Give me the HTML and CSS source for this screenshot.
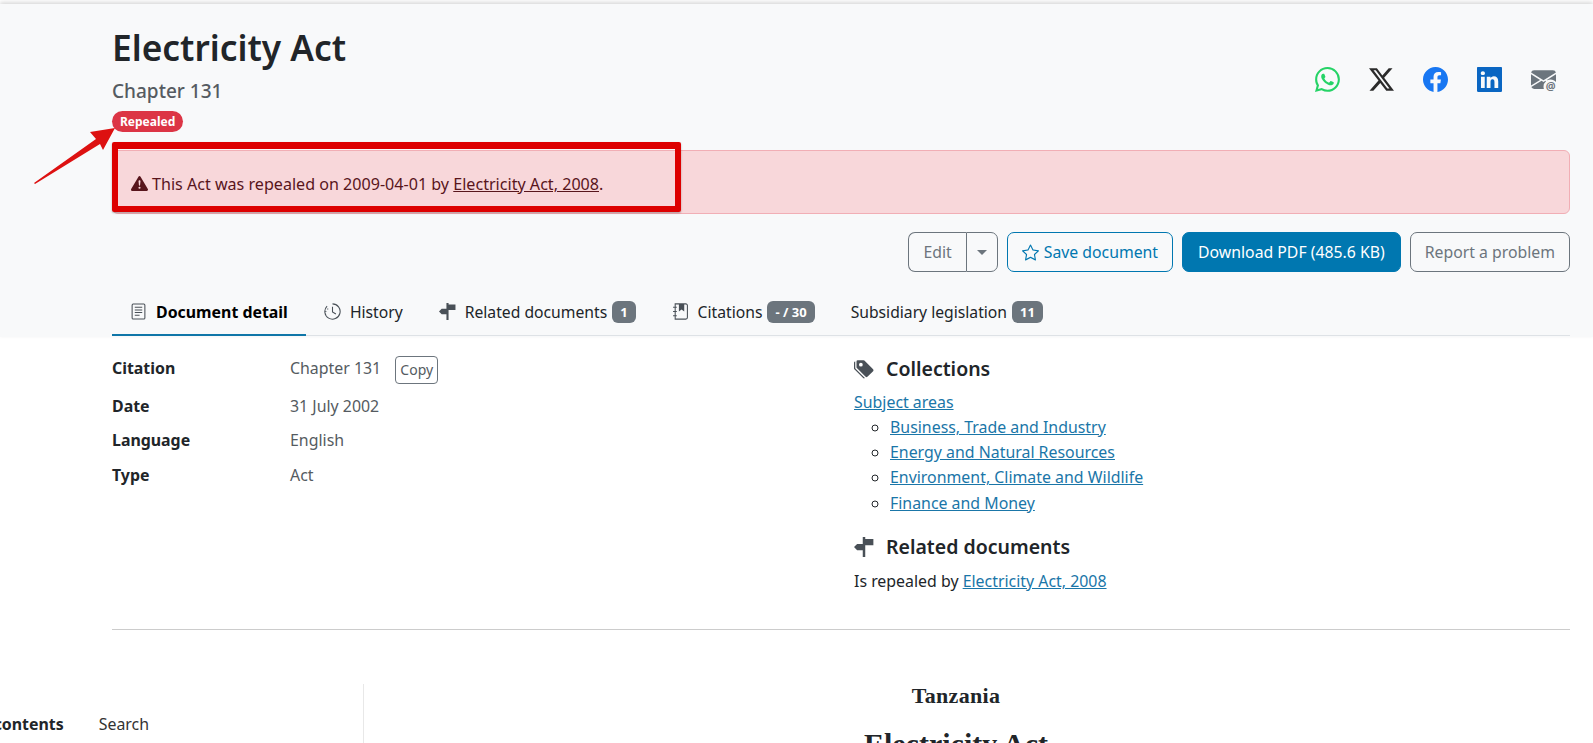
FILE: index.html
```html
<!DOCTYPE html>
<html>
<head>
    <meta charset="UTF-8">
    <title>Electricity Act</title>
    <link rel="stylesheet" href="styles.css">
</head>
<body>
    <div class="page-head">
        <div class="title-row">
            <div>
                <h1>Electricity Act</h1>
                <div class="subtitle">Chapter 131</div>
                <span class="pill">Repealed</span>
            </div>
            <div class="share">
                <svg class="share-icon whatsapp" viewBox="0 0 16 16"><path d="M13.601 2.326A7.85 7.85 0 0 0 7.994 0C3.627 0 .068 3.558.064 7.926c0 1.399.366 2.76 1.057 3.965L0 16l4.204-1.102a7.9 7.9 0 0 0 3.79.965h.004c4.368 0 7.926-3.558 7.93-7.93A7.9 7.9 0 0 0 13.6 2.326zM7.994 14.521a6.6 6.6 0 0 1-3.356-.92l-.24-.144-2.494.654.666-2.433-.156-.251a6.56 6.56 0 0 1-1.007-3.505c0-3.626 2.957-6.584 6.591-6.584a6.56 6.56 0 0 1 4.66 1.931 6.56 6.56 0 0 1 1.928 4.66c-.004 3.639-2.961 6.592-6.592 6.592m3.615-4.934c-.197-.099-1.17-.578-1.353-.646-.182-.065-.315-.099-.445.099-.133.197-.513.646-.627.775-.114.133-.232.148-.43.05-.197-.1-.836-.308-1.592-.985-.59-.525-.985-1.175-1.103-1.372-.114-.198-.011-.304.088-.403.087-.088.197-.232.296-.346.1-.114.133-.198.198-.33.065-.134.034-.248-.015-.347-.05-.099-.445-1.076-.612-1.47-.16-.389-.323-.335-.445-.34-.114-.007-.247-.007-.38-.007a.73.73 0 0 0-.529.247c-.182.198-.691.677-.691 1.654s.71 1.916.81 2.049c.098.133 1.394 2.132 3.383 2.992.47.205.84.326 1.129.418.475.152.904.129 1.246.08.38-.058 1.171-.48 1.338-.943.164-.464.164-.86.114-.943-.049-.084-.182-.133-.38-.232"/></svg>
                <svg class="share-icon xlogo" viewBox="0 0 16 16"><path d="M12.6.75h2.454l-5.36 6.142L16 15.25h-4.937l-3.867-5.07-4.425 5.07H.316l5.733-6.57L0 .75h5.063l3.495 4.633L12.601.75Zm-.86 13.028h1.36L4.323 2.145H2.865z"/></svg>
                <svg class="share-icon facebook" viewBox="0 0 16 16"><path d="M16 8.049c0-4.446-3.582-8.05-8-8.05C3.58 0-.002 3.603-.002 8.05c0 4.017 2.926 7.347 6.75 7.951v-5.625h-2.03V8.05H6.75V6.275c0-2.017 1.195-3.131 3.022-3.131.876 0 1.791.157 1.791.157v1.98h-1.009c-.993 0-1.303.621-1.303 1.258v1.51h2.218l-.354 2.326H9.25V16c3.824-.604 6.75-3.934 6.75-7.951"/></svg>
                <svg class="share-icon linkedin" viewBox="0 0 16 16"><path d="M0 .6C0 .3.3 0 .6 0h14.8c.3 0 .6.3.6.6v14.8c0 .3-.3.6-.6.6H.6c-.3 0-.6-.3-.6-.6zm4.943 12.794V6.169H2.542v7.225zm-1.2-8.212c.837 0 1.358-.554 1.358-1.248-.015-.709-.52-1.248-1.342-1.248S2.4 3.226 2.4 3.934c0 .694.521 1.248 1.327 1.248zm4.908 8.212V9.359c0-.216.016-.432.08-.586.173-.431.568-.878 1.232-.878.869 0 1.216.662 1.216 1.634v3.865h2.401V9.25c0-2.22-1.184-3.252-2.764-3.252-1.274 0-1.845.7-2.165 1.193v.025h-.016l.016-.025V6.169h-2.4c.03.678 0 7.225 0 7.225z"/></svg>
                <svg class="share-icon mail" viewBox="0 0 16 16"><path d="M2 2A2 2 0 0 0 .05 3.555L8 8.414l7.95-4.859A2 2 0 0 0 14 2zm-2 9.8V4.698l5.803 3.546zm6.761-2.97-6.57 4.026A2 2 0 0 0 2 14h6.256A4.5 4.5 0 0 1 8 12.5a4.5 4.5 0 0 1 1.606-3.446l-.367-.225L8 9.586zM16 9.671V4.697l-5.803 3.546.338.208A4.5 4.5 0 0 1 12.5 8c1.414 0 2.675.652 3.5 1.671"/><text class="mail-at" x="12.500" y="15" text-anchor="middle">@</text></svg>
            </div>
        </div>

        <div class="alert">
            <svg class="alert-icon" viewBox="0 0 16 16"><path d="M8.982 1.566a1.13 1.13 0 0 0-1.96 0L.165 13.233c-.457.778.091 1.767.98 1.767h13.713c.889 0 1.438-.99.98-1.767zM8 5c.535 0 .954.462.9.995l-.35 3.507a.552.552 0 0 1-1.1 0L7.1 5.995A.905.905 0 0 1 8 5m.002 6a1 1 0 1 1 0 2 1 1 0 0 1 0-2"/></svg>
            <span>This Act was repealed on 2009-04-01 by <a href="#">Electricity Act, 2008</a>.</span>
        </div>

        <div class="actions">
            <div class="btn-group">
                <span class="btn btn-grey btn-join-left">Edit</span>
                <span class="btn btn-grey btn-join-right"><i class="caret"></i></span>
            </div>
            <span class="btn btn-outline">
                <svg class="star" viewBox="0 0 16 16"><path d="M2.866 14.85c-.078.444.36.791.746.593l4.39-2.256 4.389 2.256c.386.198.824-.149.746-.592l-.83-4.73 3.522-3.356c.33-.314.16-.888-.282-.95l-4.898-.696L8.465.792a.513.513 0 0 0-.927 0L5.354 5.12l-4.898.696c-.441.062-.612.636-.283.95l3.523 3.356-.83 4.73zm4.905-2.767-3.686 1.894.694-3.957a.56.56 0 0 0-.163-.505L1.71 6.745l4.052-.576a.53.53 0 0 0 .393-.288L8 2.223l1.847 3.658a.53.53 0 0 0 .393.288l4.052.575-2.906 2.77a.56.56 0 0 0-.163.506l.694 3.957-3.686-1.894a.5.5 0 0 0-.461 0z"/></svg>
                Save document
            </span>
            <span class="btn btn-primary">Download PDF (485.6 KB)</span>
            <span class="btn btn-grey">Report a problem</span>
        </div>

        <div class="tabs">
            <div class="tab active">
                <svg class="tab-icon" viewBox="0 0 16 16"><path fill="none" stroke="currentColor" d="M3 1h10a1 1 0 0 1 1 1v12a1 1 0 0 1-1 1H3a1 1 0 0 1-1-1V2a1 1 0 0 1 1-1z"/><path d="M4.500 3.500h7v1h-7zM4.500 6h7v1h-7zM4.500 8.500h7v1h-7zM4.500 11h4.500v1H4.500z"/></svg>
                Document detail
            </div>
            <div class="tab">
                <svg class="tab-icon" viewBox="0 0 16 16"><path fill="none" stroke="currentColor" d="M8 .8a7.200 7.200 0 1 1-5.100 2.100"/><path fill="none" stroke="currentColor" d="M8 3.500V8.500l3.200 1.800"/><path d="M3 5.200h1v1H3zM1.200 7.500h1v1h-1z"/></svg>
                History
            </div>
            <div class="tab">
                <svg class="tab-icon" viewBox="0 0 16 16"><path d="M7 0h2v16H7z"/><path d="M8 1.500h7.500v5H8zM8 5.500H2.500L0 8l2.500 2.500H8z"/></svg>
                Related documents
                <span class="count">1</span>
            </div>
            <div class="tab">
                <svg class="tab-icon" viewBox="0 0 16 16"><path fill="none" stroke="currentColor" d="M3 .8h10a1.500 1.500 0 0 1 1.500 1.500v11.400a1.500 1.500 0 0 1-1.500 1.500H3z"/><path d="M6.500 1h5v7L9 6.200 6.500 8zM1 3.500h3.500v1H1zM1 7.500h3.500v1H1zM1 11.500h3.500v1H1z"/></svg>
                Citations
                <span class="count">- / 30</span>
            </div>
            <div class="tab">
                Subsidiary legislation
                <span class="count">11</span>
            </div>
        </div>
    </div>

    <div class="details">
        <dl class="facts">
            <dt class="first">Citation</dt>
            <dd class="first-value">Chapter 131 <span class="copy">Copy</span></dd>
            <dt>Date</dt>
            <dd>31 July 2002</dd>
            <dt>Language</dt>
            <dd>English</dd>
            <dt>Type</dt>
            <dd>Act</dd>
        </dl>
        <div class="side">
            <h2>
                <svg class="head-icon" viewBox="0 0 16 16"><path d="M2 2a1 1 0 0 1 1-1h4.586a1 1 0 0 1 .707.293l7 7a1 1 0 0 1 0 1.414l-4.586 4.586a1 1 0 0 1-1.414 0l-7-7A1 1 0 0 1 2 6.586zm3.500 4a1.500 1.500 0 1 0 0-3 1.500 1.500 0 0 0 0 3"/><path d="M1.293 7.793A1 1 0 0 1 1 7.086V2a1 1 0 0 0-1 1v4.586a1 1 0 0 0 .293.707l7 7a1 1 0 0 0 1.414 0l.043-.043z"/></svg>
                Collections
            </h2>
            <a href="#">Subject areas</a>
            <ul>
                <li><a href="#">Business, Trade and Industry</a></li>
                <li><a href="#">Energy and Natural Resources</a></li>
                <li><a href="#">Environment, Climate and Wildlife</a></li>
                <li><a href="#">Finance and Money</a></li>
            </ul>
            <h2 class="second">
                <svg class="head-icon" viewBox="0 0 16 16"><path d="M7 0h2v16H7z"/><path d="M8 1.500h7.500v5H8zM8 5.500H2.500L0 8l2.500 2.500H8z"/></svg>
                Related documents
            </h2>
            <div>Is repealed by <a href="#">Electricity Act, 2008</a></div>
        </div>
    </div>

    <hr class="rule">

    <div class="doc">
        <div class="doc-nav">
            <span class="nav-active">Table of contents</span>
            <span class="nav-plain">Search</span>
        </div>
        <div class="doc-body">
            <div class="doc-country">Tanzania</div>
            <div class="doc-title">Electricity Act</div>
        </div>
    </div>

    <!-- annotation drawn over the screenshot -->
    <div class="mark-box"></div>
    <svg class="mark-arrow" viewBox="0 0 90 70"><path d="M4 63 L66 19 L60 12 L85 8 L73 30 L70 24 L5 64 Z"/></svg>
</body>
</html>
```

FILE: styles.css
```css
html, body {
    margin: 0;
    height: 743px;
    overflow: hidden;
}
body {
    position: relative;
    background-color: #fff;
    color: #212529;
    font-family: "Noto Sans", sans-serif;
    font-size: 15.900px;
    line-height: 24px;
}
a {
    color: #1a76a8;
}

.page-head {
    margin-top: 4px;
    padding: 4px 23px 0 112px;
    height: 333px;
    box-sizing: border-box;
    background-color: #f8f9fa;
    box-shadow: 0 -2px 4px rgba(0, 0, 0, 0.15);
}
.title-row {
    display: flex;
    justify-content: space-between;
    height: 142px;
}
h1 {
    margin: 0;
    font-size: 35.300px;
    font-weight: 600;
    line-height: 78px;
    height: 62px;
}
.subtitle {
    color: #555b61;
    font-size: 19px;
    font-weight: 500;
    line-height: 32px;
    margin-top: 5px;
}
.pill {
    display: inline-block;
    background-color: #dc3545;
    color: #fff;
    font-size: 12px;
    font-weight: 700;
    line-height: 21px;
    padding: 0 8px;
    border-radius: 11px;
    vertical-align: top;
    margin-top: 4px;
}
.share {
    display: flex;
    gap: 29px;
    padding: 59px 14px 0 0;
}
.share-icon {
    width: 25px;
    height: 25px;
    fill: currentColor;
}
.whatsapp { color: #25d366; }
.xlogo { color: #2b2b2b; }
.facebook { color: #1877f2; }
.linkedin { color: #0a66c2; }
.mail { color: #6c757d; }
.mail-at {
    font-size: 7px;
    font-weight: 700;
}

.alert {
    display: flex;
    align-items: center;
    gap: 4px;
    height: 64px;
    box-sizing: border-box;
    padding: 3px 18px 0;
    font-size: 16.100px;
    background-color: #f8d7da;
    border: 1px solid #f1aeb5;
    border-radius: 6px;
    color: #58151c;
}
.alert a {
    color: #58151c;
}
.alert-icon {
    width: 17px;
    height: 17px;
    fill: currentColor;
}

.actions {
    display: flex;
    justify-content: flex-end;
    gap: 9px;
    margin-top: 18px;
}
.btn-group {
    display: flex;
}
.btn {
    display: flex;
    align-items: center;
    gap: 5px;
    height: 40px;
    box-sizing: border-box;
    padding: 0 14px;
    font-size: 15.800px;
    border: 1px solid;
    border-radius: 7px;
}
.btn-grey {
    color: #6c757d;
    border-color: #6c757d;
}
.btn-join-left {
    border-radius: 7px 0 0 7px;
    border-right: 0;
}
.btn-join-right {
    padding: 0 10px;
    border-radius: 0 7px 7px 0;
}
.caret {
    border: 5px solid transparent;
    border-top-color: #6c757d;
    border-bottom: 0;
}
.btn-outline {
    color: #0077b0;
    border-color: #0077b0;
}
.btn-primary {
    padding: 0 15px;
    color: #fff;
    background-color: #0077b0;
    border-color: #0077b0;
}
.star {
    width: 17px;
    height: 17px;
    fill: currentColor;
}

.tabs {
    display: flex;
    margin-top: 19px;
    font-size: 15.700px;
    border-bottom: 1px solid #dee2e6;
}
.tab {
    display: flex;
    align-items: center;
    gap: 5px;
    height: 45px;
    box-sizing: border-box;
    padding: 0 18px 2px;
    margin-bottom: -1px;
    border-bottom: 2px solid transparent;
}
.tab.active {
    font-size: 15.900px;
    font-weight: 700;
    color: #000;
    border-bottom-color: #0f76a8;
}
.tab-icon {
    width: 17px;
    height: 17px;
    margin-right: 4px;
    fill: #495057;
    color: #495057;
}
.count {
    background-color: #6c757d;
    color: #fff;
    font-size: 13px;
    font-weight: 700;
    line-height: 22px;
    padding: 0 8px;
    border-radius: 6px;
}

.details {
    display: flex;
    padding: 0 23px 0 112px;
    height: 292px;
}
.facts {
    display: grid;
    grid-template-columns: 178px 1fr;
    grid-template-rows: 40px 34px 34.500px 34.500px;
    align-items: center;
    align-content: start;
    width: 742px;
    margin: 12px 0 0;
}
.facts dt {
    font-weight: 700;
}
.facts dd {
    margin: 0;
    color: #555b61;
}
.facts .first {
    padding-bottom: 2px;
}
.facts .first-value {
    padding-top: 1px;
}
.copy {
    display: inline-block;
    margin-left: 10px;
    padding: 0 4px;
    font-size: 14px;
    line-height: 26px;
    border: 1px solid #6c757d;
    border-radius: 4px;
    vertical-align: middle;
}
.side {
    padding-top: 17px;
    color: #212529;
}
h2 {
    display: flex;
    align-items: center;
    gap: 12px;
    margin: 0 0 6px;
    font-size: 19.500px;
    font-weight: 600;
    line-height: 30px;
}
h2.second {
    margin-top: 16px;
    margin-bottom: 7px;
}
.head-icon {
    width: 20px;
    height: 20px;
    fill: #495057;
}
ul {
    margin: 1px 0 0;
    padding-left: 36px;
    list-style: circle;
}
li {
    line-height: 25.200px;
}

.rule {
    margin: 0 23px 0 112px;
    border: 0;
    border-top: 1px solid #ccc;
}

.doc {
    display: flex;
    margin-top: 54px;
}
.doc-nav {
    width: 364px;
    height: 80px;
    box-sizing: border-box;
    border-right: 1px solid #e8e8e8;
    display: flex;
    justify-content: flex-end;
    gap: 35px;
    padding: 28px 214px 0 0;
    white-space: nowrap;
}
.nav-active {
    font-weight: 700;
}
.nav-plain {
    color: #333;
}
.doc-body {
    flex: 1;
    padding-right: 45px;
    text-align: center;
    font-family: "Liberation Serif", serif;
}
.doc-country {
    font-size: 22px;
    font-weight: 700;
    letter-spacing: 0.300px;
}
.doc-title {
    font-size: 30px;
    font-weight: 700;
    margin-top: 24px;
}

.mark-box {
    position: absolute;
    left: 112px;
    top: 142px;
    width: 569px;
    height: 70px;
    box-sizing: border-box;
    border: 6px solid #dd0000;
    border-top-width: 7px;
    border-radius: 2px;
    box-shadow: 0 1px 2px rgba(0, 0, 0, 0.3);
}
.mark-arrow {
    position: absolute;
    left: 30px;
    top: 120px;
    width: 90px;
    height: 70px;
    fill: #dd1111;
}
```
